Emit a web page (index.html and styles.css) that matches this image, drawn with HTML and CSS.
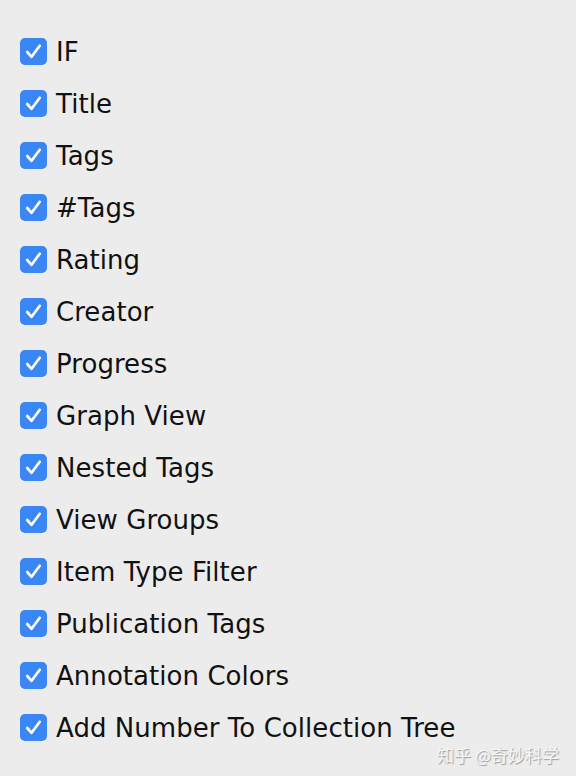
FILE: index.html
```html
<!DOCTYPE html>
<html>
<head>
<meta charset="utf-8">
<link rel="stylesheet" href="styles.css">
</head>
<body>
<ul class="list">
  <li class="item"><span class="box"><svg viewBox="0 0 28 28"><path d="M7.5 14.5 L12 19.5 L20.5 8" /></svg></span><span class="label">IF</span></li>
  <li class="item"><span class="box"><svg viewBox="0 0 28 28"><path d="M7.5 14.5 L12 19.5 L20.5 8" /></svg></span><span class="label">Title</span></li>
  <li class="item"><span class="box"><svg viewBox="0 0 28 28"><path d="M7.5 14.5 L12 19.5 L20.5 8" /></svg></span><span class="label">Tags</span></li>
  <li class="item"><span class="box"><svg viewBox="0 0 28 28"><path d="M7.5 14.5 L12 19.5 L20.5 8" /></svg></span><span class="label">#Tags</span></li>
  <li class="item"><span class="box"><svg viewBox="0 0 28 28"><path d="M7.5 14.5 L12 19.5 L20.5 8" /></svg></span><span class="label">Rating</span></li>
  <li class="item"><span class="box"><svg viewBox="0 0 28 28"><path d="M7.5 14.5 L12 19.5 L20.5 8" /></svg></span><span class="label">Creator</span></li>
  <li class="item"><span class="box"><svg viewBox="0 0 28 28"><path d="M7.5 14.5 L12 19.5 L20.5 8" /></svg></span><span class="label">Progress</span></li>
  <li class="item"><span class="box"><svg viewBox="0 0 28 28"><path d="M7.5 14.5 L12 19.5 L20.5 8" /></svg></span><span class="label">Graph View</span></li>
  <li class="item"><span class="box"><svg viewBox="0 0 28 28"><path d="M7.5 14.5 L12 19.5 L20.5 8" /></svg></span><span class="label">Nested Tags</span></li>
  <li class="item"><span class="box"><svg viewBox="0 0 28 28"><path d="M7.5 14.5 L12 19.5 L20.5 8" /></svg></span><span class="label">View Groups</span></li>
  <li class="item"><span class="box"><svg viewBox="0 0 28 28"><path d="M7.5 14.5 L12 19.5 L20.5 8" /></svg></span><span class="label">Item Type Filter</span></li>
  <li class="item"><span class="box"><svg viewBox="0 0 28 28"><path d="M7.5 14.5 L12 19.5 L20.5 8" /></svg></span><span class="label">Publication Tags</span></li>
  <li class="item"><span class="box"><svg viewBox="0 0 28 28"><path d="M7.5 14.5 L12 19.5 L20.5 8" /></svg></span><span class="label">Annotation Colors</span></li>
  <li class="item"><span class="box"><svg viewBox="0 0 28 28"><path d="M7.5 14.5 L12 19.5 L20.5 8" /></svg></span><span class="label">Add Number To Collection Tree</span></li>
</ul>
<div class="watermark">知乎 @奇妙科学</div>
</body>
</html>
```
FILE: styles.css
```css
html, body {
  margin: 0;
  padding: 0;
}
body {
  width: 576px;
  height: 776px;
  background: #ececec;
  font-family: "DejaVu Sans", "Noto Sans CJK SC", sans-serif;
  position: relative;
  overflow: hidden;
}
.list {
  list-style: none;
  margin: 0;
  padding: 25px 0 0 20px;
  display: flex;
  flex-direction: column;
}
.item {
  height: 52px;
  display: flex;
  align-items: center;
  gap: 9px;
}
.box {
  width: 27px;
  height: 27px;
  border-radius: 5px;
  background: #3a86f4;
  display: flex;
  flex-shrink: 0;
}
.box svg {
  width: 27px;
  height: 27px;
}
.box path {
  fill: none;
  stroke: #fff;
  stroke-width: 2.8;
  stroke-linecap: round;
  stroke-linejoin: round;
}
.label {
  font-size: 26px;
  line-height: 30px;
  color: #111;
  letter-spacing: 0.05px;
  position: relative;
  top: 1px;
}
.watermark {
  position: absolute;
  right: 17px;
  bottom: 9px;
  font-family: "Noto Sans CJK SC", sans-serif;
  font-size: 17px;
  color: #f6f6f6;
  text-shadow: 1px 1px 1px rgba(0,0,0,0.35);
}
```
